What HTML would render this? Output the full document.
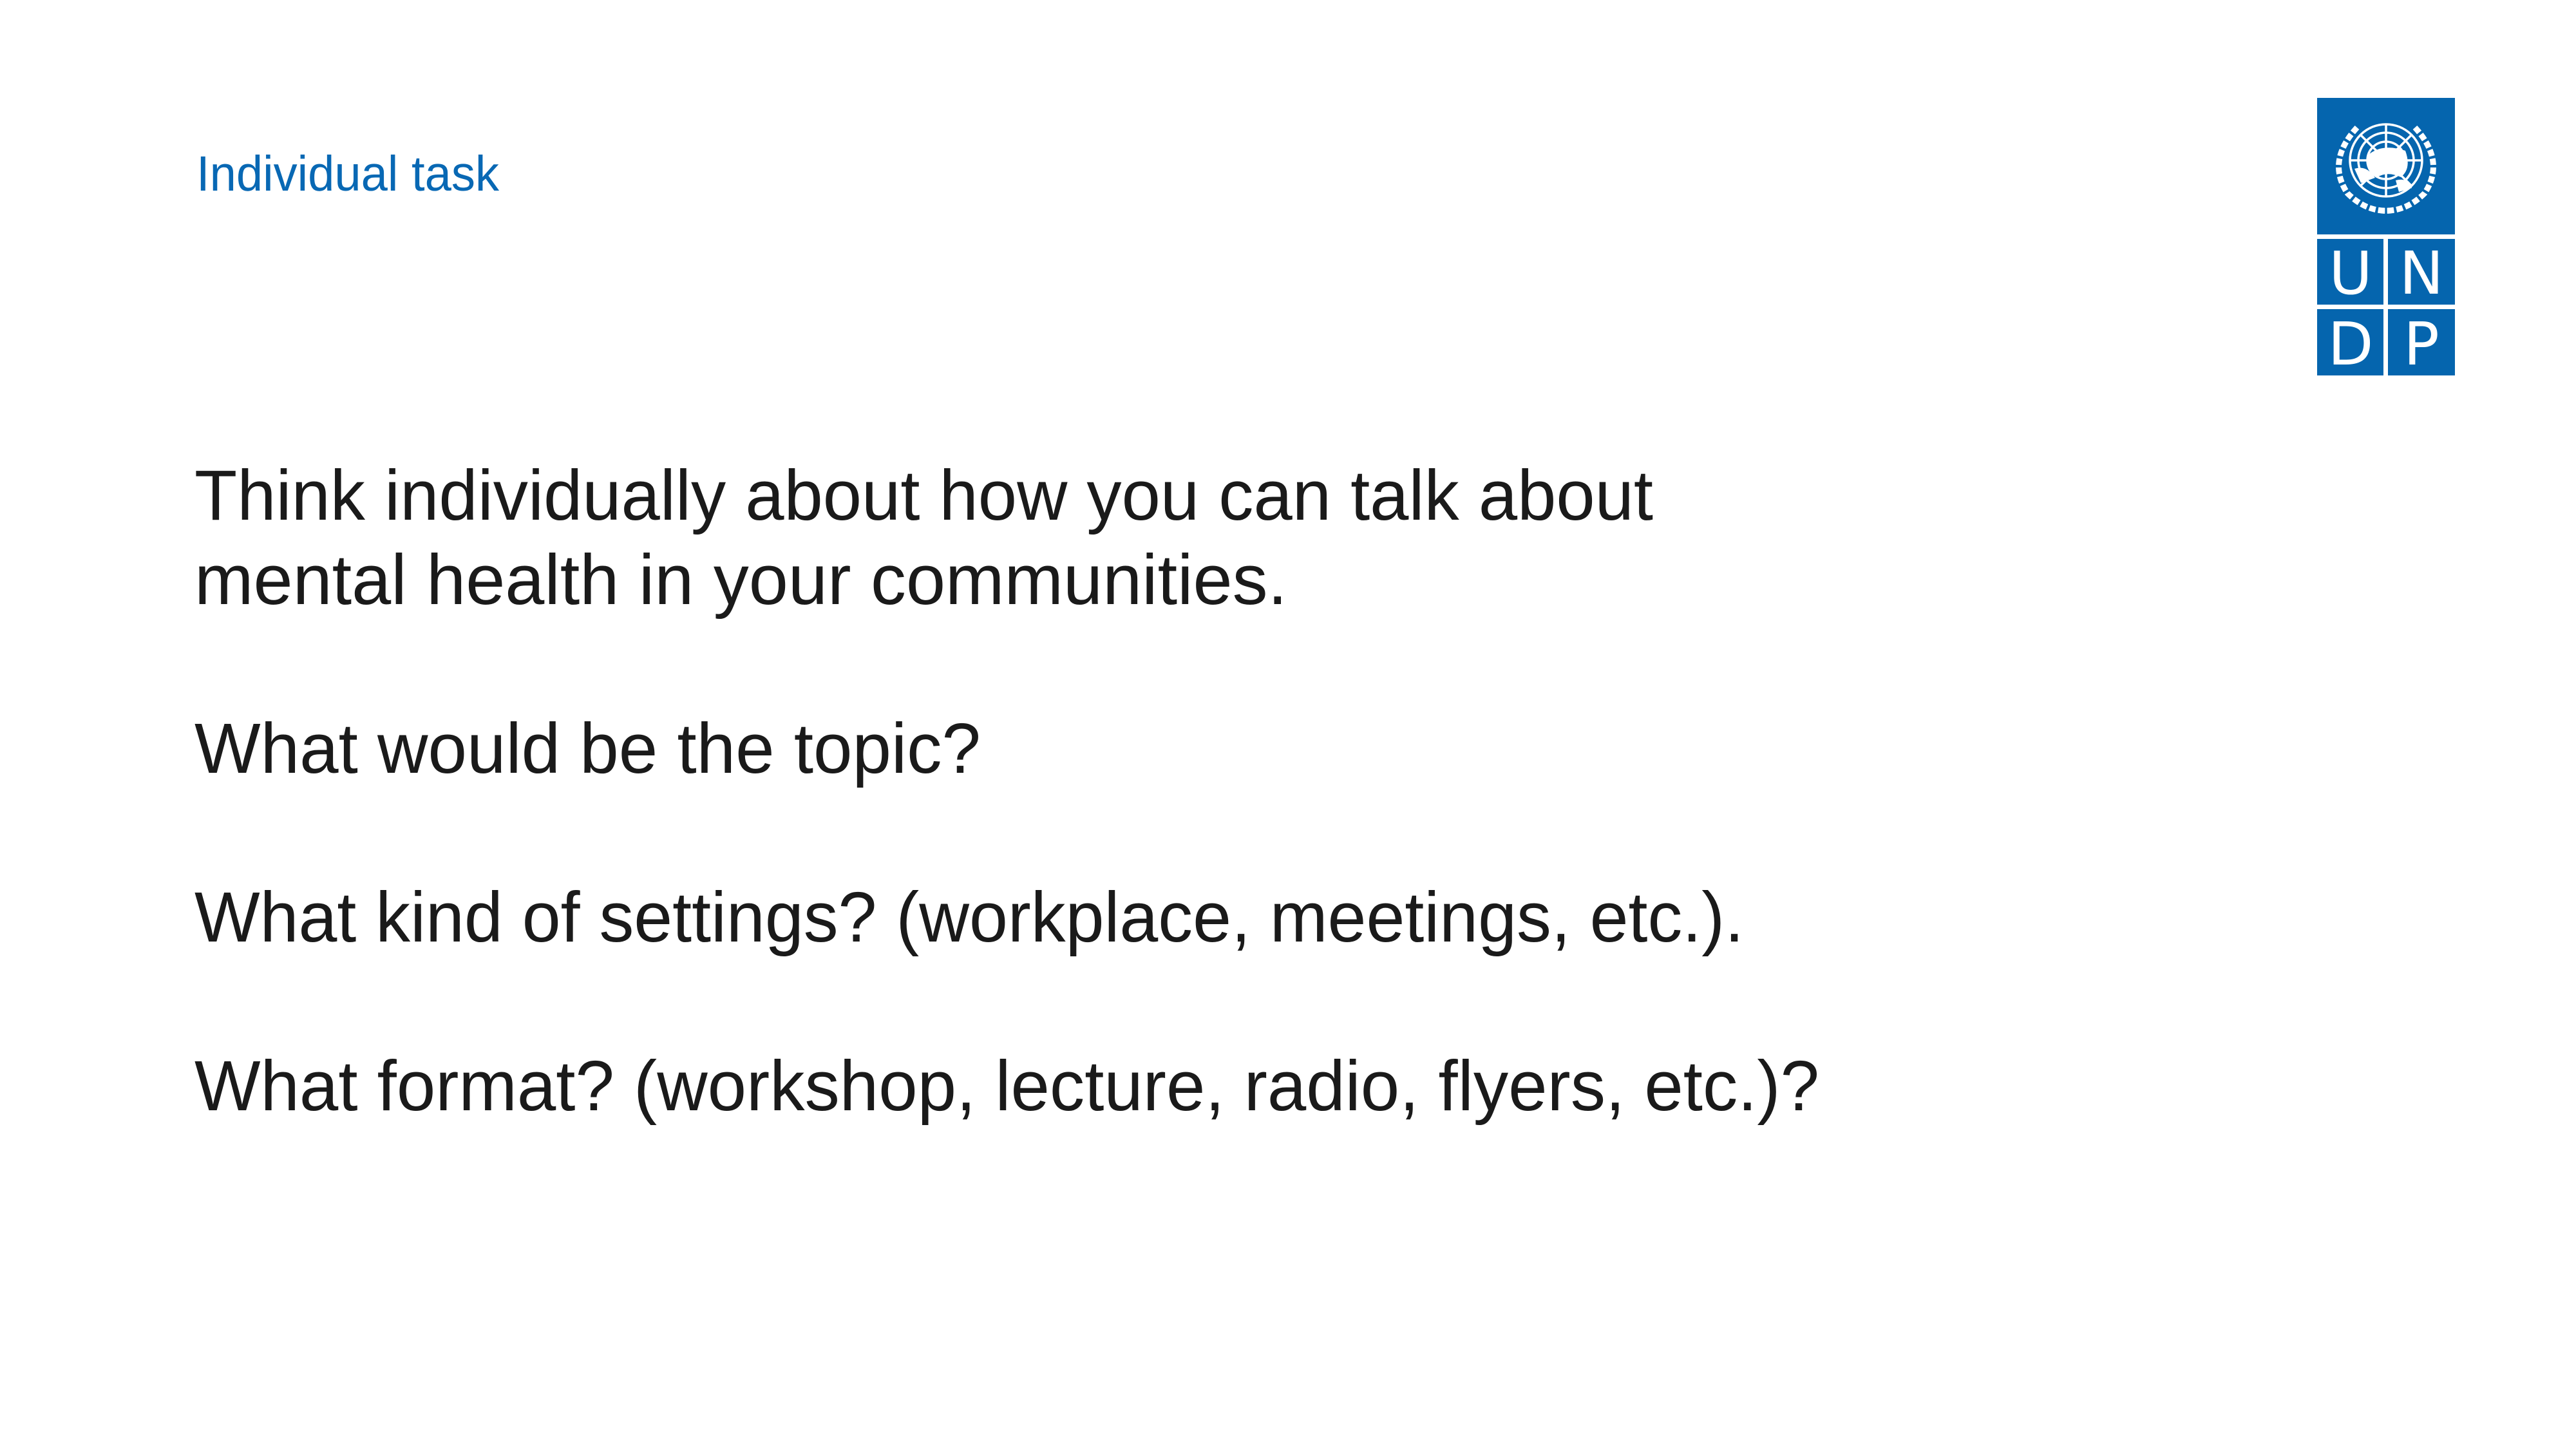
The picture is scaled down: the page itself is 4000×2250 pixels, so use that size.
<!DOCTYPE html>
<html><head><meta charset="utf-8"><style>
html,body{margin:0;padding:0;background:#fff;}
body{width:4000px;height:2250px;overflow:hidden;position:relative;}
</style></head><body>
<svg width="4000" height="2250" viewBox="0 0 4000 2250" style="position:absolute;left:0;top:0">
<text x="305" y="296" font-family="Liberation Sans, Arial, sans-serif" font-size="77" fill="#0868b4" textLength="470" lengthAdjust="spacingAndGlyphs">Individual task</text>
<g font-family="Liberation Sans, Arial, sans-serif" font-size="110" fill="#1a1a1a">
<text x="302" y="807" textLength="2265" lengthAdjust="spacingAndGlyphs">Think individually about how you can talk about</text>
<text x="302" y="938" textLength="1697" lengthAdjust="spacingAndGlyphs">mental health in your communities.</text>
<text x="302" y="1200" textLength="1221" lengthAdjust="spacingAndGlyphs">What would be the topic?</text>
<text x="302" y="1462" textLength="2406" lengthAdjust="spacingAndGlyphs">What kind of settings? (workplace, meetings, etc.).</text>
<text x="302" y="1724" textLength="2523" lengthAdjust="spacingAndGlyphs">What format? (workshop, lecture, radio, flyers, etc.)?</text>
</g>
<g fill="#0565ae">
<rect x="3598" y="152" width="214" height="212"/>
<rect x="3598" y="371" width="103" height="102"/>
<rect x="3708" y="371" width="104" height="102"/>
<rect x="3598" y="480" width="103" height="103"/>
<rect x="3708" y="480" width="104" height="103"/>
</g>
<g stroke="#fff" fill="none" stroke-width="3.5">
<circle cx="3705" cy="249" r="56"/>
<circle cx="3705" cy="249" r="43"/>
<circle cx="3705" cy="249" r="29"/>
<circle cx="3705" cy="249" r="15"/>
<line x1="3649" y1="249" x2="3761" y2="249"/>
<line x1="3705" y1="193" x2="3705" y2="305"/>
<line x1="3665" y1="209" x2="3745" y2="289"/>
<line x1="3745" y1="209" x2="3665" y2="289"/>
<path d="M3660 198 Q3612 250 3645 300 Q3675 330 3712 327" stroke-width="9" stroke-dasharray="10 4"/>
<path d="M3750 198 Q3798 250 3765 300 Q3735 330 3698 327" stroke-width="9" stroke-dasharray="10 4"/>
</g>
<g fill="#fff">
<path d="M3678 240 Q3700 222 3735 234 Q3745 262 3728 275 Q3706 265 3690 276 Q3672 264 3678 240Z"/>
<path d="M3656 262 Q3675 256 3688 276 L3666 284Z"/>
<path d="M3720 280 Q3740 275 3745 292 L3725 298Z"/>
</g>
<g font-family="DejaVu Sans, Liberation Sans, sans-serif" fill="#fff">
<text x="3650" y="456" text-anchor="middle" font-size="92">U</text>
<text x="3760" y="456" text-anchor="middle" font-size="92">N</text>
<text x="3650" y="566" text-anchor="middle" font-size="92">D</text>
<text x="3760" y="566" text-anchor="middle" font-size="92">P</text>
</g>
</svg>
</body></html>
